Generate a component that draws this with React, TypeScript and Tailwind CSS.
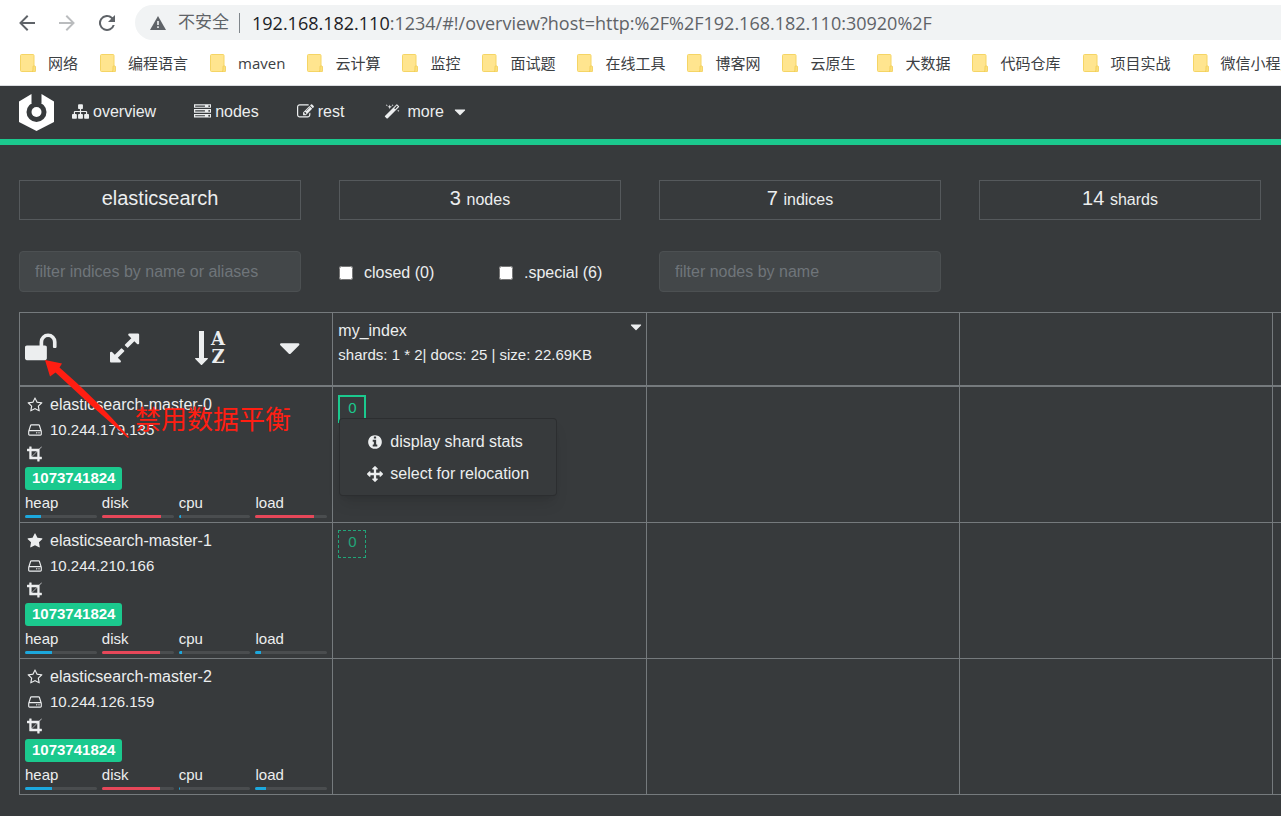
import type { ReactNode } from "react"

const bookmarks = [
  "网络",
  "编程语言",
  "maven",
  "云计算",
  "监控",
  "面试题",
  "在线工具",
  "博客网",
  "云原生",
  "大数据",
  "代码仓库",
  "项目实战",
  "微信小程序",
]

const stats = [
  { value: "elasticsearch", label: "" },
  { value: "3", label: "nodes" },
  { value: "7", label: "indices" },
  { value: "14", label: "shards" },
]

const nodes = [
  { name: "elasticsearch-master-0", ip: "10.244.179.135", master: false, usage: [22, 82, 3, 82] },
  { name: "elasticsearch-master-1", ip: "10.244.210.166", master: true, usage: [37, 81, 4, 7] },
  { name: "elasticsearch-master-2", ip: "10.244.126.159", master: false, usage: [37, 81, 1, 14] },
]

const metrics = ["heap", "disk", "cpu", "load"]

const icons = {
  sitemap:
    "M1792 1248v320q0 40-28 68t-68 28h-320q-40 0-68-28t-28-68v-320q0-40 28-68t68-28h96v-192h-512v192h96q40 0 68 28t28 68v320q0 40-28 68t-68 28h-320q-40 0-68-28t-28-68v-320q0-40 28-68t68-28h96v-192h-512v192h96q40 0 68 28t28 68v320q0 40-28 68t-68 28h-320q-40 0-68-28t-28-68v-320q0-40 28-68t68-28h96v-192q0-52 38-90t90-38h512v-192h-96q-40 0-68-28t-28-68v-320q0-40 28-68t68-28h320q40 0 68 28t28 68v320q0 40-28 68t-68 28h-96v192h512q52 0 90 38t38 90v192h96q40 0 68 28t28 68z",
  server:
    "M128 1408h1024v-128h-1024v128zm0-512h1024v-128h-1024v128zm1568 448q0-40-28-68t-68-28-68 28-28 68 28 68 68 28 68-28 28-68zm-1568-960h1024v-128h-1024v128zm1568 448q0-40-28-68t-68-28-68 28-28 68 28 68 68 28 68-28 28-68zm0-512q0-40-28-68t-68-28-68 28-28 68 28 68 68 28 68-28 28-68zm96 832v384h-1792v-384h1792zm0-512v384h-1792v-384h1792zm0-512v384h-1792v-384h1792z",
  edit: "M888 1184l116-116-152-152-116 116v56h96v96h56zm440-720q-16-16-33 1l-350 350q-17 17-1 33t33-1l350-350q17-17 1-33zm80 594v190q0 119-84.5 203.5t-203.5 84.5h-832q-119 0-203.5-84.5t-84.5-203.5v-832q0-119 84.5-203.5t203.5-84.5h832q63 0 117 25 15 7 18 23 3 17-9 29l-49 49q-14 14-32 8-23-6-45-6h-832q-66 0-113 47t-47 113v832q0 66 47 113t113 47h832q66 0 113-47t47-113v-126q0-13 9-22l64-64q15-15 35-7t20 29zm-96-738l288 288-672 672h-288v-288zm444 132l-92 92-288-288 92-92q28-28 68-28t68 28l152 152q28 28 28 68t-28 68z",
  magic:
    "M1254 581l293-293-107-107-293 293zm447-293q0 27-18 45l-1286 1286q-18 18-45 18t-45-18l-198-198q-18-18-18-45t18-45l1286-1286q18-18 45-18t45 18l198 198q18 18 18 45zm-1351-190l98 30-98 30-30 98-30-98-98-30 98-30 30-98zm350 162l196 60-196 60-60 196-60-196-196-60 196-60 60-196zm930 478l98 30-98 30-30 98-30-98-98-30 98-30 30-98zm-640-640l98 30-98 30-30 98-30-98-98-30 98-30 30-98z",
  caret:
    "M1408 704q0 26-19 45l-448 448q-19 19-45 19t-45-19l-448-448q-19-19-19-45t19-45 45-19h896q26 0 45 19t19 45z",
  unlock:
    "M1728 576v256q0 26-19 45t-45 19h-64q-26 0-45-19t-19-45v-256q0-106-75-181t-181-75-181 75-75 181v192h96q40 0 68 28t28 68v576q0 40-28 68t-68 28h-960q-40 0-68-28t-28-68v-576q0-40 28-68t68-28h672v-192q0-185 131.5-316.5t316.5-131.5 316.5 131.5 131.5 316.5z",
  expand:
    "M883 1056q0 13-10 23l-332 332 144 144q19 19 19 45t-19 45-45 19h-448q-26 0-45-19t-19-45v-448q0-26 19-45t45-19 45 19l144 144 332-332q10-10 23-10t23 10l114 114q10 10 10 23zm781-864v448q0 26-19 45t-45 19-45-19l-144-144-332 332q-10 10-23 10t-23-10l-114-114q-10-10-10-23t10-23l332-332-144-144q-19-19-19-45t19-45 45-19h448q26 0 45 19t19 45z",
  star: "M1728 647q0 22-26 48l-363 354 86 500q1 7 1 20 0 21-10.5 35.5t-30.5 14.5q-19 0-40-12l-449-236-449 236q-22 12-40 12-21 0-31.5-14.5t-10.5-35.5q0-6 2-20l86-500-364-354q-25-27-25-48 0-37 56-46l502-73 225-455q19-41 49-41t49 41l225 455 502 73q56 9 56 46z",
  starOutline:
    "M1201 1004l306-297-422-62-189-382-189 382-422 62 306 297-73 421 378-199 377 199zm527-357q0 22-26 48l-363 354 86 500q1 7 1 20 0 50-41 50-19 0-40-12l-449-236-449 236q-22 12-40 12-21 0-31.5-14.5t-10.5-35.5q0-6 2-20l86-500-364-354q-25-27-25-48 0-37 56-46l502-73 225-455q19-41 49-41t49 41l225 455 502 73q56 9 56 46z",
  hdd: "M1168 1216q0 33-23.5 56.5t-56.5 23.5-56.5-23.5-23.5-56.5 23.5-56.5 56.5-23.5 56.5 23.5 23.5 56.5zm256 0q0 33-23.5 56.5t-56.5 23.5-56.5-23.5-23.5-56.5 23.5-56.5 56.5-23.5 56.5 23.5 23.5 56.5zm112 160v-320q0-13-9.5-22.5t-22.5-9.5h-1216q-13 0-22.5 9.5t-9.5 22.5v320q0 13 9.5 22.5t22.5 9.5h1216q13 0 22.5-9.5t9.5-22.5zm-1230-480h1180l-157-482q-4-13-16-21.5t-26-8.5h-782q-14 0-26 8.5t-16 21.5zm1358 160v320q0 66-47 113t-113 47h-1216q-66 0-113-47t-47-113v-320q0-25 16-75l197-606q17-53 63-86t101-33h782q55 0 101 33t63 86l197 606q16 50 16 75z",
  crop: "M557 1216h595v-595zm-45-45l595-595h-595v595zm1152 77v192q0 14-9 23t-23 9h-224v224q0 14-9 23t-23 9h-192q-14 0-23-9t-9-23v-224h-864q-14 0-23-9t-9-23v-864h-224q-14 0-23-9t-9-23v-192q0-14 9-23t23-9h224v-224q0-14 9-23t23-9h192q14 0 23 9t9 23v224h851l246-247q10-9 23-9t23 9q9 10 9 23t-9 23l-247 246v851h224q14 0 23 9t9 23z",
  info: "M1152 1376v-160q0-14-9-23t-23-9h-96v-512q0-14-9-23t-23-9h-320q-14 0-23 9t-9 23v160q0 14 9 23t23 9h96v320h-96q-14 0-23 9t-9 23v160q0 14 9 23t23 9h448q14 0 23-9t9-23zm-128-896v-160q0-14-9-23t-23-9h-192q-14 0-23 9t-9 23v160q0 14 9 23t23 9h192q14 0 23-9t9-23zm640 416q0 209-103 385.5t-279.5 279.5-385.5 103-385.5-103-279.5-279.5-103-385.5 103-385.5 279.5-279.5 385.5-103 385.5 103 279.5 279.5 103 385.5z",
  arrows:
    "M1792 896q0 26-19 45l-256 256q-19 19-45 19t-45-19-19-45v-128h-384v384h128q26 0 45 19t19 45-19 45l-256 256q-19 19-45 19t-45-19l-256-256q-19-19-19-45t19-45 45-19h128v-384h-384v128q0 26-19 45t-45 19-45-19l-256-256q-19-19-19-45t19-45l256-256q19-19 45-19t45 19 19 45v128h384v-384h-128q-26 0-45-19t-19-45 19-45l256-256q19-19 45-19t45 19l256 256q19 19 19 45t-19 45-45 19h-128v384h384v-128q0-26 19-45t45-19 45 19l256 256q19 19 19 45z",
}

const Icon = ({
  name,
  className = "size-4",
  viewBox = "0 0 1792 1792",
}: {
  name: keyof typeof icons
  className?: string
  viewBox?: string
}) => (
  <svg viewBox={viewBox} className={`shrink-0 fill-current ${className}`} aria-hidden="true">
    <path d={icons[name]} />
  </svg>
)

const FolderIcon = () => (
  <svg viewBox="0 0 16 18" className="h-[18px] w-4 shrink-0" aria-hidden="true">
    <rect x="0.5" y="0.5" width="13.5" height="17" rx="1" fill="#ffe58f" stroke="#f5d565" />
    <path d="M13 12.5c0-.8 2.5-.8 2.5 0V17c0 .6-.4 1-1 1h-2c.4-1.500.5-3.500.5-5.500z" fill="#fbe07c" stroke="#efc94c" strokeWidth="0.7" />
  </svg>
)

const BrowserBar = () => (
  <div className="border-b border-[#dadce0] bg-white pt-[5px] font-['Open_Sans','Noto_Sans_CJK_SC',sans-serif]">
    <div className="flex items-center">
      <div className="flex w-[135px] shrink-0 items-center gap-4 pl-[15px] text-[#5f6368]">
        <button aria-label="Back">
          <svg viewBox="0 0 24 24" className="size-6 fill-current">
            <path d="M20 11.100H7.800l5.600-5.600L12 4.100l-7.900 7.900 7.900 7.900 1.400-1.400-5.600-5.600H20z" />
          </svg>
        </button>
        <button aria-label="Forward" className="text-[#babcbe]">
          <svg viewBox="0 0 24 24" className="size-6 fill-current">
            <path d="M4 11.100h12.200l-5.600-5.600L12 4.100l7.900 7.900-7.900 7.900-1.400-1.400 5.600-5.600H4z" />
          </svg>
        </button>
        <button aria-label="Reload">
          <svg viewBox="0 0 24 24" className="size-6 fill-current">
            <path d="M17.650 6.350A8 8 0 1 0 19.730 14h-2.080A6 6 0 1 1 12 6c1.660 0 3.140.69 4.220 1.780L13 11h7V4z" />
          </svg>
        </button>
      </div>
      <div className="flex h-[35px] flex-1 items-center overflow-hidden rounded-l-full bg-[#f1f3f4] pl-[15px] text-lg whitespace-nowrap text-[#5f6368]">
        <svg viewBox="0 0 16 14" className="h-[14px] w-4 shrink-0" aria-hidden="true">
          <path d="M8 0l8 14H0z" fill="#5f6368" />
          <path d="M7.200 5h1.600v4H7.200zM7.200 10.300h1.600v1.600H7.200z" fill="#f1f3f4" />
        </svg>
        <span className="pl-3 text-[17px]">不安全</span>
        <span className="mr-3 ml-[10px] h-5 w-px bg-[#80868b]" />
        <span className="text-[#202124]">192.168.182.110</span>
        <span>:1234/#!/overview?host=http:%2F%2F192.168.182.110:30920%2F</span>
      </div>
    </div>
    <div className="flex h-[45px] items-center gap-[22px] overflow-hidden pl-5 text-[15px] whitespace-nowrap text-[#3c4043]">
      {bookmarks.map((name) => (
        <a key={name} href="#" className="flex shrink-0 items-center gap-3">
          <FolderIcon />
          <span className="pt-[2px]">{name}</span>
        </a>
      ))}
    </div>
  </div>
)

const NavLink = ({ children }: { children: ReactNode }) => (
  <a href="#" className="flex items-center gap-1">
    {children}
  </a>
)

const Navbar = () => (
  <nav className="flex h-[59px] items-center border-b-[6px] border-[#1bc98e] pl-[19px]">
    <a href="#" aria-label="cerebro" className="mr-[18px]">
      <svg viewBox="0 0 35 37" className="h-[37px] w-[35px]">
        <path d="M12.500 0L0 7.500V28l17.500 9L35 28V7.500L22.500 0v9h-10z" fill="#fff" />
        <circle cx="17.500" cy="18" r="10" fill="#373a3c" />
        <path d="M13.500 0h8l.7 12h-9.400z" fill="#373a3c" />
        <circle cx="17.500" cy="18" r="5" fill="#fff" />
      </svg>
    </a>
    <div className="flex items-center gap-[38px] pb-[2px]">
      <NavLink>
        <Icon name="sitemap" className="size-[17px]" />
        overview
      </NavLink>
      <NavLink>
        <Icon name="server" className="size-[17px]" />
        nodes
      </NavLink>
      <NavLink>
        <Icon name="edit" className="size-[17px]" />
        rest
      </NavLink>
      <button className="flex items-center gap-[7px] pl-[2px]">
        <Icon name="magic" />
        more
        <Icon name="caret" className="size-[18px]" />
      </button>
    </div>
  </nav>
)

const Filters = () => (
  <div className="mt-[31px] grid grid-cols-6 gap-[38px]">
    <input
      type="text"
      aria-label="filter indices"
      placeholder="filter indices by name or aliases"
      className="h-[41px] rounded border border-[#4c5052] bg-[#434749] px-[15px] placeholder:text-[#6f757a]"
    />
    <div className="flex gap-[38px] pt-[2px]">
      <label className="flex flex-1 items-center gap-[11px]">
        <input type="checkbox" className="size-[14px]" />
        closed (0)
      </label>
      <label className="flex flex-1 items-center gap-[11px]">
        <input type="checkbox" className="size-[14px]" />
        .special (6)
      </label>
    </div>
    <input
      type="text"
      aria-label="filter nodes"
      placeholder="filter nodes by name"
      className="h-[41px] rounded border border-[#4c5052] bg-[#434749] px-[15px] placeholder:text-[#6f757a]"
    />
  </div>
)

const Toolbar = () => (
  <div className="flex items-center gap-[53px]">
    <button aria-label="disable shard allocation" className="w-8">
      <Icon name="unlock" viewBox="64 0 1792 1792" className="size-[34px]" />
    </button>
    <button aria-label="expand" className="w-8">
      <Icon name="expand" viewBox="128 0 1792 1792" className="size-[34px]" />
    </button>
    <button aria-label="sort by name" className="flex w-8 items-center gap-[3px]">
      <svg viewBox="0 0 13 34" className="h-[34px] w-[13px] shrink-0 fill-current">
        <path d="M4 0h5v27h3.500q.8.300.2 1l-5.600 5.700q-.6.500-1.200 0L.3 28q-.6-.7.200-1H4z" />
      </svg>
      <span className="flex flex-col font-['DejaVu_Serif',serif] text-lg leading-[18px] font-bold">
        <span>A</span>
        <span>Z</span>
      </span>
    </button>
    <button aria-label="more actions" className="w-8">
      <Icon name="caret" viewBox="384 0 1792 1792" className="size-[34px]" />
    </button>
  </div>
)

const NodeCell = ({ node }: { node: (typeof nodes)[number] }) => (
  <>
    <div className="flex h-[25px] items-center gap-[7px] pl-[2px]">
      <Icon name={node.master ? "star" : "starOutline"} />
      {node.name}
    </div>
    <div className="flex h-[25px] items-center gap-[7px] pl-[2px] text-[15px]">
      <Icon name="hdd" />
      {node.ip}
    </div>
    <div className="flex h-[23px] items-center pl-[2px]">
      <Icon name="crop" />
    </div>
    <span className="mt-px flex h-[23px] w-fit items-center rounded-[3px] bg-[#1bc98e] px-[7px] text-[15px] font-bold text-white">
      1073741824
    </span>
    <div className="mt-px grid grid-cols-4 gap-[5px] text-[15px] leading-6">
      {metrics.map((metric, i) => (
        <div key={metric}>
          {metric}
          <div className="h-[3px] overflow-hidden rounded-sm bg-[#4a4d4f]">
            <div
              className={`h-full ${node.usage[i] > 75 ? "bg-[#e64759]" : "bg-[#1ca8dd]"}`}
              style={{ width: `${node.usage[i]}%` }}
            />
          </div>
        </div>
      ))}
    </div>
  </>
)

const ShardMenu = () => (
  <div className="absolute top-[31px] left-[6px] z-10 w-[218px] rounded border border-black/20 bg-[#373a3c] pt-[7px] pb-[5px] pl-[27px] shadow-lg">
    <button className="flex h-8 items-center gap-[7px]">
      <Icon name="info" />
      display shard stats
    </button>
    <button className="flex h-8 items-center gap-[7px]">
      <Icon name="arrows" />
      select for relocation
    </button>
  </div>
)

// hand-drawn note on top of the table, points at the allocation lock
const Annotation = () => (
  <div className="pointer-events-none absolute top-[48px] left-[26px] z-20 text-[#ff1e12]">
    <svg viewBox="0 0 86 80" className="h-[80px] w-[86px] fill-current" aria-hidden="true">
      <path d="M0 0L17 3.500 14.500 7.500Q50 38 84 77L83 78Q46 46 10.500 12.500L5 16.500z" />
    </svg>
    <div className="absolute top-[38px] left-[90px] font-['Noto_Sans_CJK_SC',sans-serif] text-[26px] whitespace-nowrap">
      禁用数据平衡
    </div>
  </div>
)

const cell = "border border-[#757a7d] px-[5px] pt-[6px] pb-1 align-top"

const ShardTable = () => (
  <div className="relative mt-5 mr-px">
    <table className="w-full table-fixed border-collapse">
      <thead>
        <tr className="h-[73px]">
          <th className="border border-b-2 border-[#757a7d] px-[5px] pb-[2px] align-middle font-normal">
            <Toolbar />
          </th>
          <th className="border border-b-2 border-[#757a7d] px-[5px] pt-[6px] text-left align-top font-normal">
            <div className="flex h-6 justify-between">
              my_index
              <button aria-label="index actions" className="-mt-2 -mr-1">
                <Icon name="caret" className="size-[18px]" />
              </button>
            </div>
            <div className="text-[15px] leading-6">shards: 1 * 2| docs: 25 | size: 22.69KB</div>
          </th>
          {[0, 1, 2, 3].map((i) => (
            <th key={i} className="border border-b-2 border-[#757a7d]" />
          ))}
        </tr>
      </thead>
      <tbody>
        {nodes.map((node, i) => (
          <tr key={node.name}>
            <td className={cell}>
              <NodeCell node={node} />
            </td>
            <td className={`${cell} relative`}>
              {i === 0 && (
                <>
                  <button className="mt-[2px] block size-7 border-2 border-[#1bc98e] pb-[3px] text-[15px] text-[#1bc98e]">
                    0
                  </button>
                  <ShardMenu />
                </>
              )}
              {i === 1 && (
                <button className="mt-px block size-7 border border-dashed border-[#1bc98e] pb-[3px] text-[15px] text-[#1bc98e] opacity-75">
                  0
                </button>
              )}
            </td>
            {[0, 1, 2, 3].map((n) => (
              <td key={n} className={cell} />
            ))}
          </tr>
        ))}
      </tbody>
    </table>
    <Annotation />
  </div>
)

const App = () => {
  return (
    <div className="min-h-screen overflow-hidden bg-[#373a3c] font-['Liberation_Sans',Arial,sans-serif] text-base text-[#eceeef]">
      <BrowserBar />
      <Navbar />
      <main className="min-w-[1920px] px-[19px] pt-[35px] pb-[22px]">
        <div className="grid grid-cols-6 gap-[38px]">
          {stats.map(({ value, label }) => (
            <div key={value} className="h-10 border border-[#55595c] text-center leading-[34px]">
              <span className="text-xl leading-[34px]">
                {value}
                {label && " "}
              </span>
              {label}
            </div>
          ))}
        </div>
        <Filters />
        <ShardTable />
      </main>
    </div>
  )
}

export default App
